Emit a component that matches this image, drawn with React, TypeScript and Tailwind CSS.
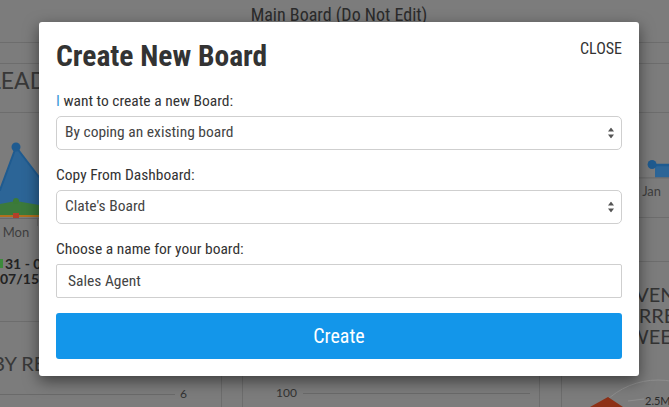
import React from 'react';

const line = 'border-[#6d6d6d]';

const SelectBox = ({ value }: { value: string }) => (
  <div className="relative">
    <select
      defaultValue={value}
      className="block w-full h-[34px] appearance-none rounded-[5px] border border-[#cfcfcf] bg-white pl-[8px] pr-[24px] text-[15.5px] text-[#444] outline-none"
    >
      <option>{value}</option>
    </select>
    <svg
      className="pointer-events-none absolute right-[8px] top-1/2 -translate-y-1/2"
      width="6"
      height="11"
      viewBox="0 0 6 11"
    >
      <path d="M3 0 L6 4 L0 4 Z M0 7 L6 7 L3 11 Z" fill="#555" />
    </svg>
  </div>
);

const Label = ({ children }: { children: React.ReactNode }) => (
  <label className="block mb-[5px] text-[15.5px] leading-[20px] text-[#333]">{children}</label>
);

const Modal = () => (
  <div className="absolute left-[39px] top-[22px] w-[600px] rounded-[3px] bg-white px-[17px] pt-[17px] pb-[17px] shadow-[0_5px_15px_rgba(0,0,0,0.5)] font-['Roboto_Condensed','Roboto',sans-serif] [font-stretch:87.5%]">
    <div className="flex items-start justify-between">
      <h2 className="mt-[3px] text-[29.5px] leading-[29px] font-bold text-[#333]">Create New Board</h2>
      <button type="button" className="text-[16px] leading-[20px] text-[#333] uppercase">
        Close
      </button>
    </div>

    <div className="mt-[20px]">
      <Label>
        <span className="text-[#3a9ad9]">I</span> want to create a new Board:
      </Label>
      <SelectBox value="By coping an existing board" />
    </div>

    <div className="mt-[15px]">
      <Label>Copy From Dashboard:</Label>
      <SelectBox value="Clate's Board" />
    </div>

    <div className="mt-[15px]">
      <Label>Choose a name for your board:</Label>
      <input
        defaultValue="Sales Agent"
        className="block w-full h-[34px] rounded-[2px] border border-[#cfcfcf] bg-white pl-[11px] text-[15.5px] text-[#444] outline-none"
      />
    </div>

    <button
      type="button"
      className="mt-[15px] block w-full h-[46px] rounded-[3px] bg-[#1396ea] text-[20px] text-white"
    >
      Create
    </button>
  </div>
);

const Dashboard = () => (
  <div className="flex h-full flex-col">
    <header
      className={`h-[43px] shrink-0 border-b ${line} pt-[3px] pl-[9px] text-center font-['Roboto',sans-serif] [font-stretch:87.5%] text-[18px] leading-[24px] text-[#2b2b2b]`}
    >
      Main Board (Do Not Edit)
    </header>
    <div className={`h-[21px] shrink-0 border-b ${line}`} />

    <div className="flex flex-1 font-['Lato',sans-serif] text-[#333]">
      {/* left column */}
      <div className={`-ml-[78px] w-[300px] shrink-0 border-r ${line} flex flex-col`}>
        <div className={`h-[49px] shrink-0 border-b ${line} pl-[67px] pt-[2px] text-[23px] leading-[28px] text-[#383838] whitespace-nowrap`}>
          LEAD SOURCES
        </div>
        <svg width="300" height="133" viewBox="-78 113 300 133" className="shrink-0">
          <polygon points="-78,205 0,190 16,147 39,177 90,196 90,217 -78,217" fill="#2c6597" />
          <polyline points="-78,205 0,190 16,147 39,177 90,196" fill="none" stroke="#1f5b90" strokeWidth="2" />
          <circle cx="16" cy="147" r="4.5" fill="#1f5b90" />
          <polygon points="-78,209 0,204 16,201 39,205 90,208 90,216 -78,216" fill="#3c7a3b" />
          <circle cx="16" cy="201" r="3" fill="#3a7a36" />
          <line x1="-78" y1="216" x2="90" y2="216" stroke="#b0701e" strokeWidth="2" />
          <rect x="13" y="213" width="6" height="6" fill="#b3402a" />
          <line x1="-78" y1="218.5" x2="222" y2="218.5" stroke="#6a6a6a" />
          <line x1="37.5" y1="218" x2="37.5" y2="226" stroke="#6a6a6a" />
          <text x="16" y="237" textAnchor="middle" fontSize="13" fill="#3e3e3e">
            Mon
          </text>
        </svg>
        <div className={`h-[76px] shrink-0 border-b ${line} pt-[10px] text-[14px] font-bold leading-[15px] text-[#222] whitespace-nowrap`}>
          <div className="flex items-center pl-[74px]">
            <span className="mr-[2px] h-[9px] w-[7px] bg-[#3c8a3c]" />
            31 - 04/01/15 -
          </div>
          <div className="pl-[78px]">07/15 Current</div>
        </div>
        <div className="h-[29px] shrink-0" />
        <div className="pl-[70px] text-[20px] leading-[24px] text-[#383838] whitespace-nowrap">BY REP</div>
        <div className="mt-[13px] flex items-center">
          <div className="ml-[60px] h-px w-[193px] bg-[#6a6a6a]" />
          <span className="ml-[5px] text-[12px] leading-[12px] text-[#333]">6</span>
        </div>
      </div>

      {/* middle column */}
      <div className={`ml-[20px] w-[298px] shrink-0 border-x ${line} flex flex-col justify-end pb-[8px]`}>
        <div className="flex items-center">
          <span className="ml-[33px] text-[12px] leading-[12px] text-[#333]">100</span>
          <div className="ml-[6px] h-px w-[227px] bg-[#6a6a6a]" />
        </div>
      </div>

      {/* right column */}
      <div className={`ml-[21px] w-[190px] shrink-0 border-l ${line} flex flex-col`}>
        <div className={`h-[49px] shrink-0 border-b ${line} pl-[10px] pt-[2px] text-[23px] leading-[28px] text-[#383838]`}>
          SALES
        </div>
        <svg width="190" height="105" viewBox="562 113 190 105" className={`shrink-0 border-b ${line}`}>
          <polygon points="655,166 752,166 752,178 655,178" fill="#2c6597" />
          <line x1="652" y1="165.5" x2="752" y2="165.5" stroke="#1f5b90" strokeWidth="2.5" />
          <circle cx="652" cy="165" r="4.5" fill="#1f5b90" />
          <line x1="562" y1="178.5" x2="752" y2="178.5" stroke="#6a6a6a" />
          <text x="642" y="197" fontSize="13" fill="#3e3e3e">
            Jan
          </text>
        </svg>
        <div className={`h-[44px] shrink-0 border-b ${line}`} />
        <div className="shrink-0 pt-[22px] text-center text-[20px] leading-[21px] text-[#333]">
          REVENUE
          <br />
          CURRENT
          <br />
          WEEK
        </div>
        <svg width="190" height="60" viewBox="562 347 190 60" className="shrink-0">
          <circle cx="658" cy="455" r="75" fill="none" stroke="#8e8e8e" strokeWidth="1" />
          <path d="M608 397 L623 407 L590 407 Z" fill="#8d3016" />
          <line x1="628" y1="401" x2="644" y2="399" stroke="#8e8e8e" />
          <text x="645" y="405" fontSize="11" fill="#2a2a2a">
            2.5M
          </text>
        </svg>
      </div>
    </div>
  </div>
);

export default function App() {
  return (
    <div className="relative h-[407px] w-[669px] overflow-hidden bg-[#7c7c7c]">
      <Dashboard />
      <Modal />
    </div>
  );
}
